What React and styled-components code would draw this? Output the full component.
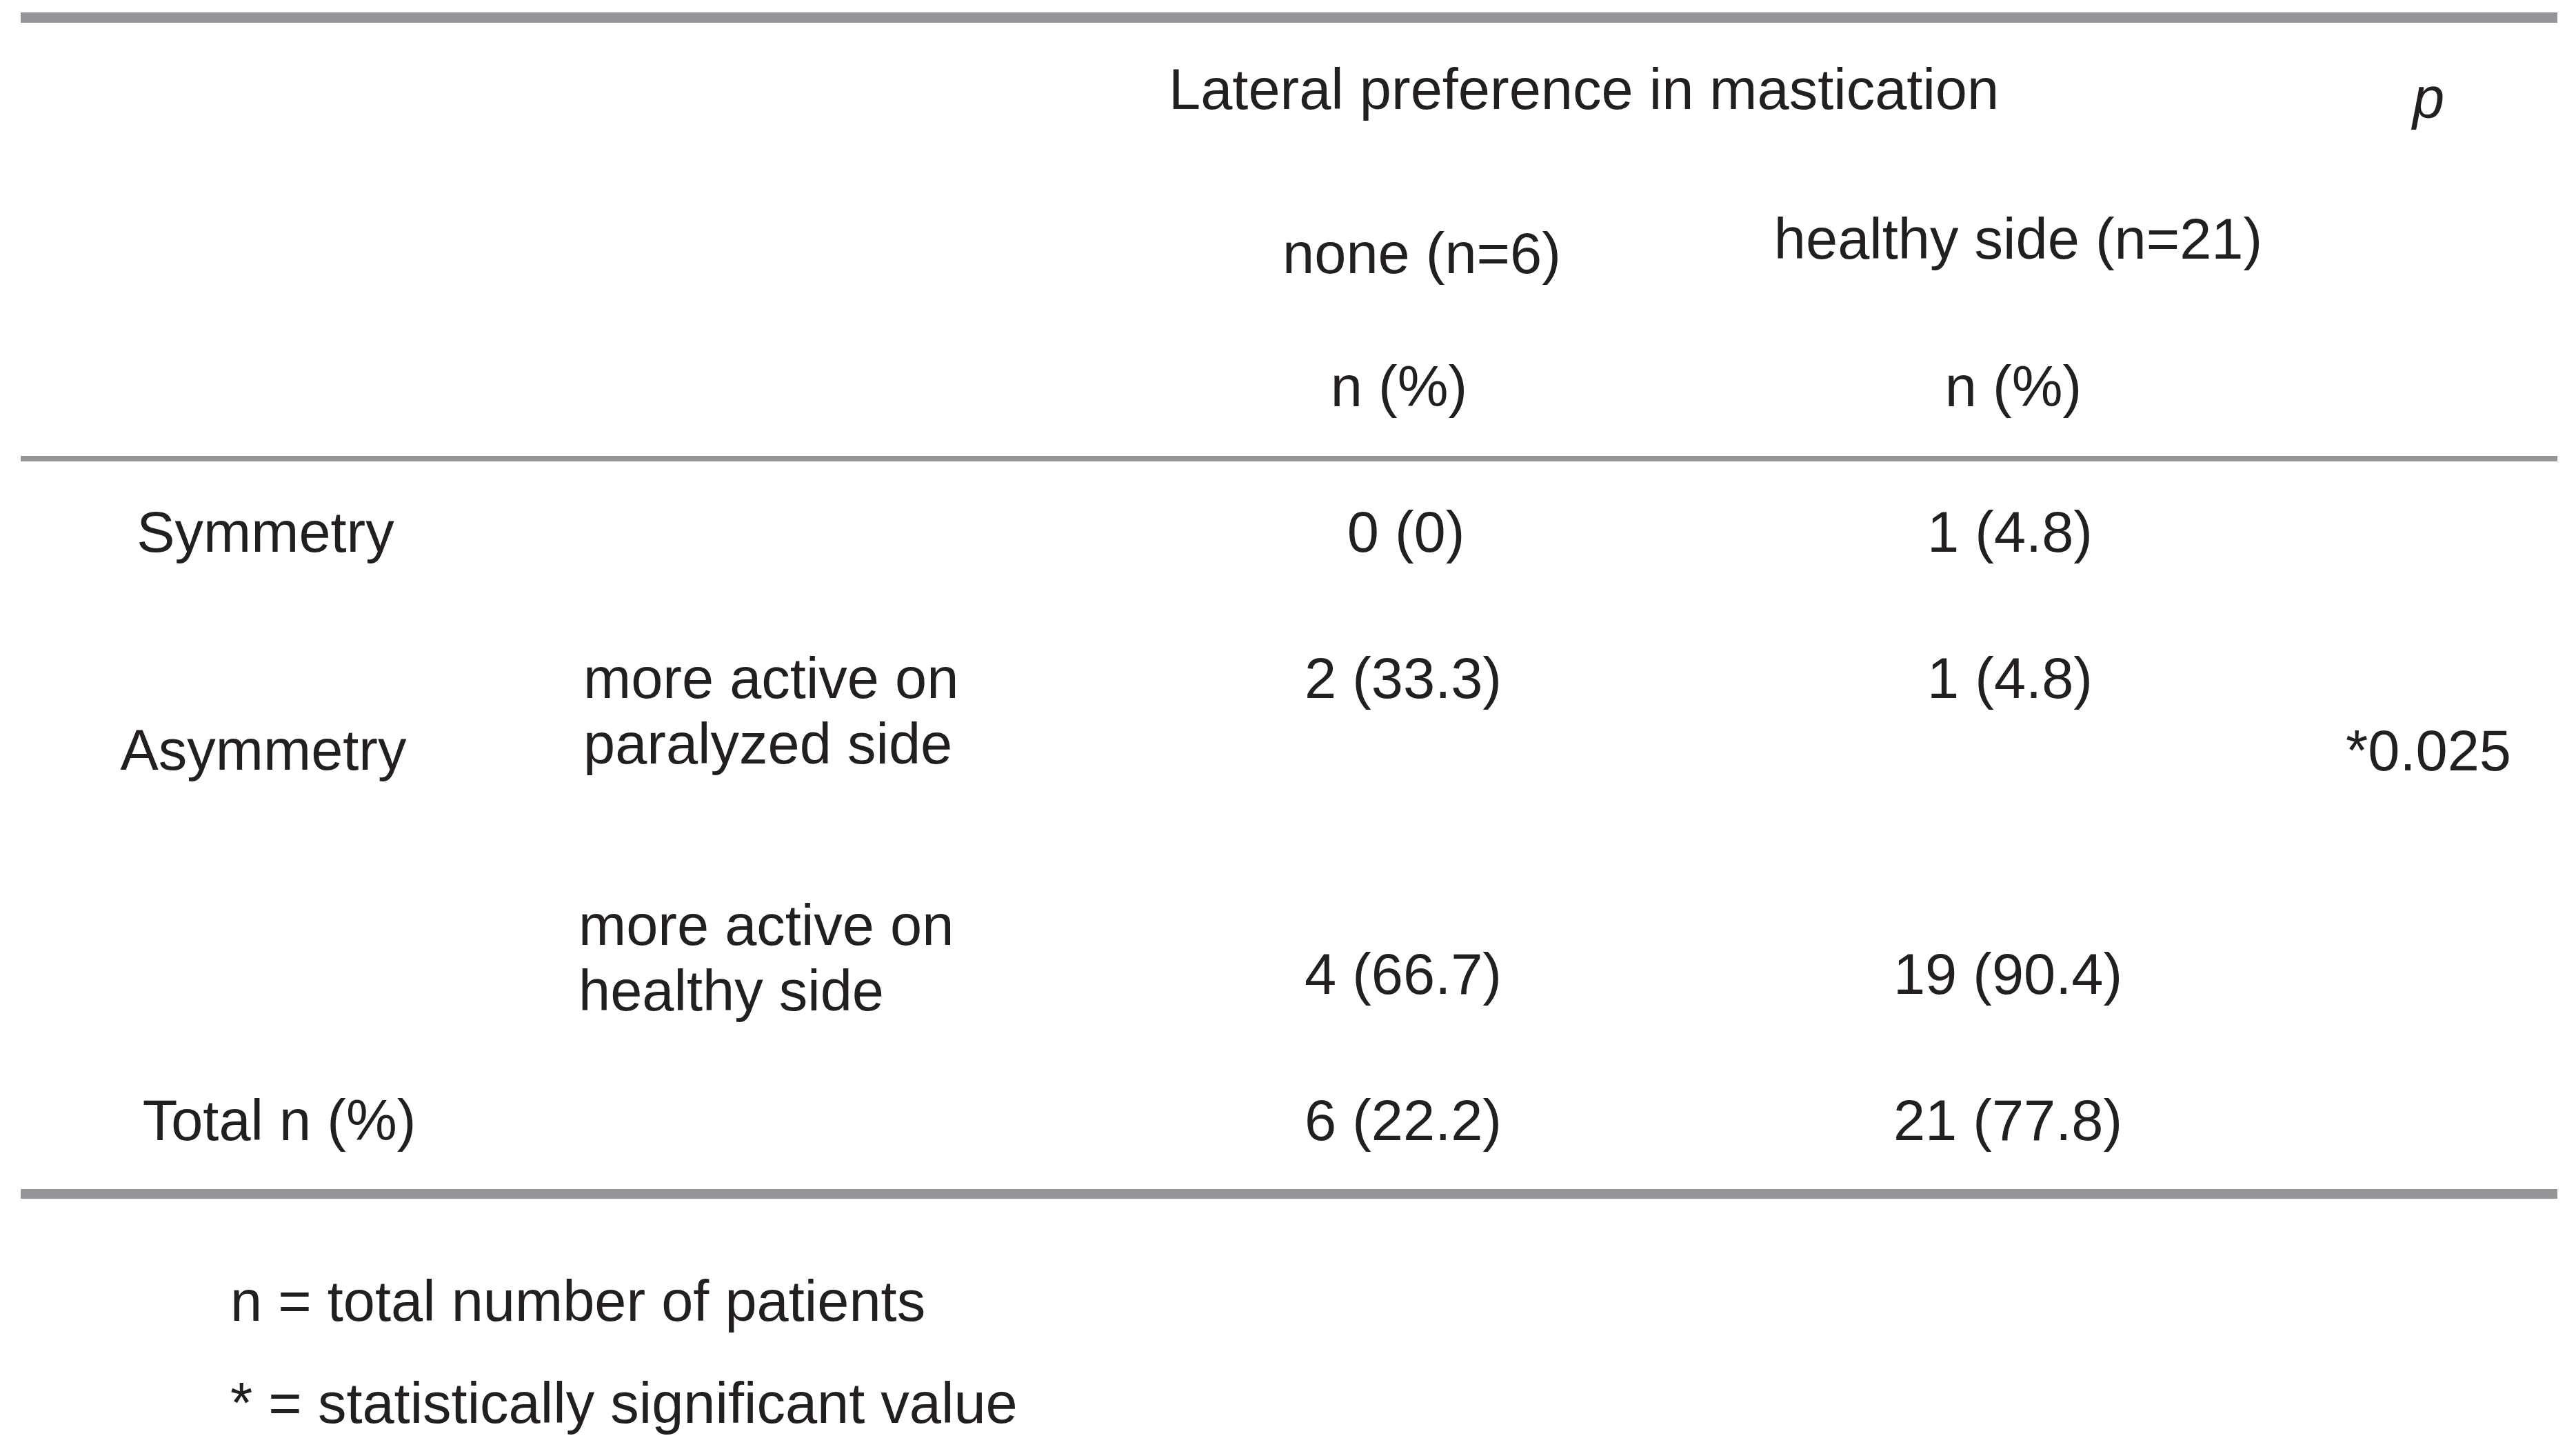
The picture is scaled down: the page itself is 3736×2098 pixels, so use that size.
import React from 'react'
import styled, { createGlobalStyle } from 'styled-components'

const GlobalStyle = createGlobalStyle`
	html, body {
		margin: 0;
		padding: 0;
		background: #ffffff;
	}
	body {
		font-family: "Liberation Sans", Arial, Helvetica, sans-serif;
		color: #231f20;
	}
`

// shared column template for the header and body rows
const COLS = '710px 860px 870px 890px 324px'

const Page = styled.div`
	width: 3679px;
	height: 2098px;
	padding: 18px 27px 0 30px;
	box-sizing: content-box;
	overflow: hidden;
`

const Rule = styled.div`
	height: ${props => props.thick}px;
	background-color: #939598;
`

const Row = styled.div`
	display: grid;
	grid-template-columns: ${COLS};
	height: ${props => props.h}px;
	align-items: start;
`

const Cell = styled.div`
	grid-column: ${props => props.col} / span ${props => props.span || 1};
	grid-row: 1;
	padding-top: ${props => props.top || 0}px;
	padding-left: ${props => props.indent || 0}px;
	text-align: ${props => props.align || 'center'};
	font-size: 83px;
	line-height: 95px;
	white-space: nowrap;
	font-style: ${props => props.italic ? 'italic' : 'normal'};
`

const Shift = styled.span`
	display: inline-block;
	margin-left: ${props => Math.max(0, props.dx || 0) * 2}px;
	margin-right: ${props => Math.max(0, -(props.dx || 0)) * 2}px;
`

const Notes = styled.div`
	display: flex;
	flex-direction: column;
	gap: 53px;
	margin-top: 101px;
	padding-left: 304px;
`

const Note = styled.div`
	font-size: 83px;
	line-height: 95px;
	white-space: nowrap;
`

const App = () => (
	<Page>
		<GlobalStyle />
		<Rule thick={15} />

		<Row h={217}>
			<Cell col={3} span={2} align="left" indent={95} top={49}>Lateral preference in mastication</Cell>
			<Cell col={5} top={62} italic>p</Cell>
		</Row>
		<Row h={200}>
			<Cell col={3} top={70}><Shift dx={27}>none (n=6)</Shift></Cell>
			<Cell col={4} top={49}><Shift dx={12}>healthy side (n=21)</Shift></Cell>
		</Row>
		<Row h={211}>
			<Cell col={3} top={63}><Shift dx={-6}>n (%)</Shift></Cell>
			<Cell col={4} top={63}><Shift dx={5}>n (%)</Shift></Cell>
		</Row>

		<Rule thick={8} />

		<Row h={211}>
			<Cell col={1} top={55}>Symmetry</Cell>
			<Cell col={3} top={55}><Shift dx={4}>0 (0)</Shift></Cell>
			<Cell col={4} top={55}>1 (4.8)</Cell>
		</Row>
		<Row h={340}>
			<Cell col={1} top={160}><Shift dx={-3}>Asymmetry</Shift></Cell>
			<Cell col={2} align="left" indent={106} top={56}>more active on<br />paralyzed side</Cell>
			<Cell col={3} top={56}>2 (33.3)</Cell>
			<Cell col={4} top={56}>1 (4.8)</Cell>
			<Cell col={5} top={161}>*0.025</Cell>
		</Row>
		<Row h={300}>
			<Cell col={2} align="left" indent={99} top={74}>more active on<br />healthy side</Cell>
			<Cell col={3} top={145}>4 (66.7)</Cell>
			<Cell col={4} top={145}><Shift dx={-3}>19 (90.4)</Shift></Cell>
		</Row>
		<Row h={204}>
			<Cell col={1} top={57}><Shift dx={20}>Total n (%)</Shift></Cell>
			<Cell col={3} top={57}>6 (22.2)</Cell>
			<Cell col={4} top={57}><Shift dx={-3}>21 (77.8)</Shift></Cell>
		</Row>

		<Rule thick={14} />

		<Notes>
			<Note>n = total number of patients</Note>
			<Note>* = statistically significant value</Note>
		</Notes>
	</Page>
)

export default App
